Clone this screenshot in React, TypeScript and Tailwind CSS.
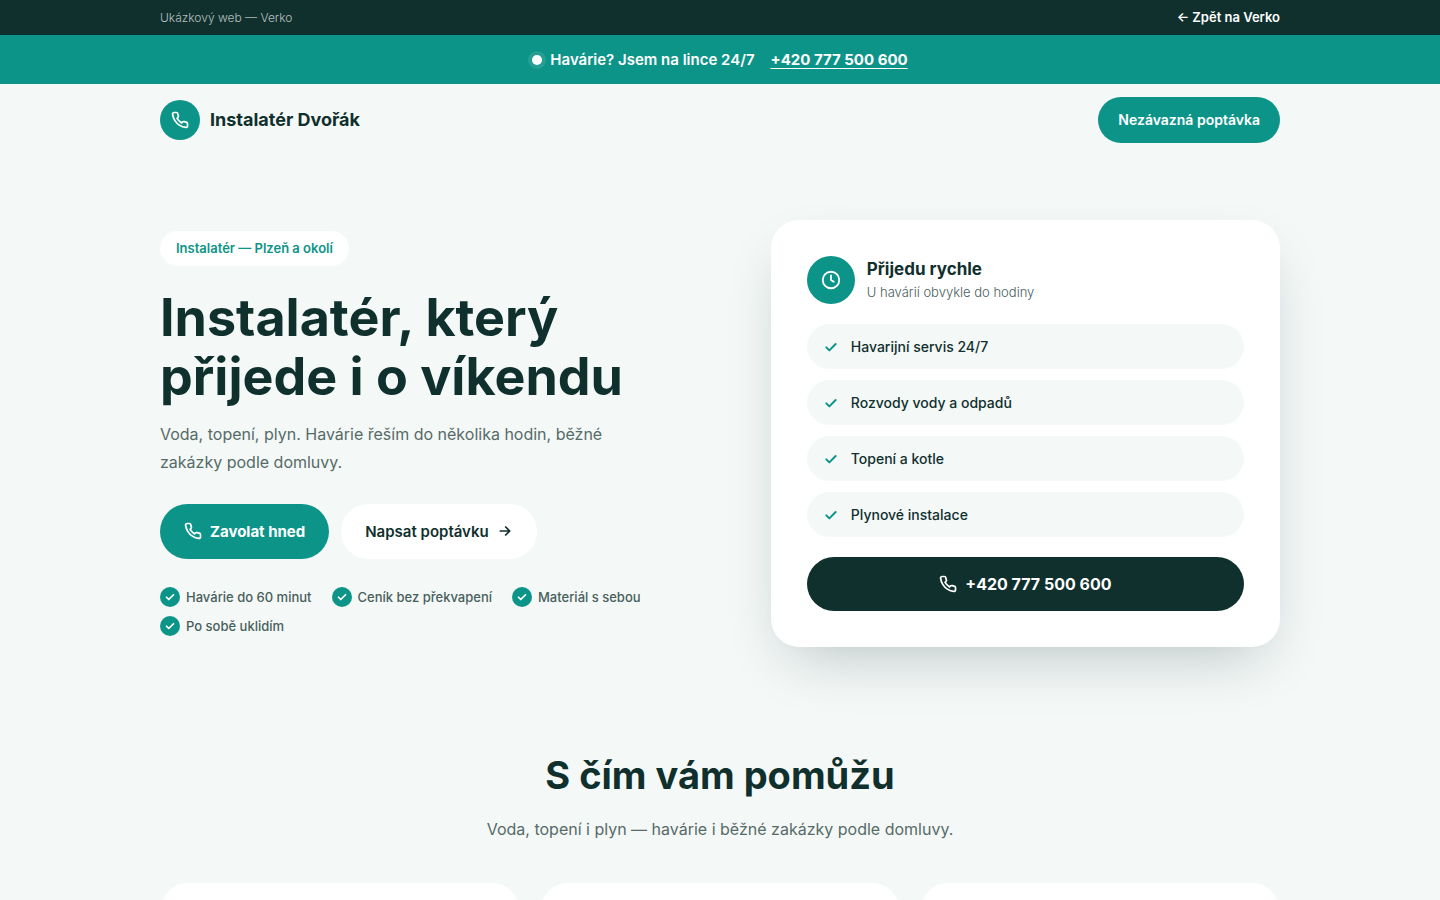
import type { ReactNode } from 'react'

const PHONE = '+420 777 500 600'
const PHONE_HREF = 'tel:+420777500600'

const services = ['Havarijní servis 24/7', 'Rozvody vody a odpadů', 'Topení a kotle', 'Plynové instalace']
const benefits = ['Havárie do 60 minut', 'Ceník bez překvapení', 'Materiál s sebou', 'Po sobě uklidím']

const icons = {
  phone:
    'M22 16.92v3a2 2 0 0 1-2.18 2 19.79 19.79 0 0 1-8.63-3.07 19.5 19.5 0 0 1-6-6 19.79 19.79 0 0 1-3.07-8.67A2 2 0 0 1 4.11 2h3a2 2 0 0 1 2 1.72 12.84 12.84 0 0 0 .7 2.81 2 2 0 0 1-.45 2.11L8.09 9.91a16 16 0 0 0 6 6l1.27-1.27a2 2 0 0 1 2.11-.45 12.84 12.84 0 0 0 2.81.7A2 2 0 0 1 22 16.92z',
  clock: 'M12 7v5l3 2M21 12a9 9 0 1 1-18 0 9 9 0 0 1 18 0Z',
  check: 'M5 12.5l4.5 4.5L19 7.5',
  arrow: 'M5 12h14M13 6l6 6-6 6',
}

function Icon({ name, className, stroke = 2 }: { name: keyof typeof icons; className: string; stroke?: number }) {
  return (
    <svg
      viewBox="0 0 24 24"
      fill="none"
      stroke="currentColor"
      strokeWidth={stroke}
      strokeLinecap="round"
      strokeLinejoin="round"
      className={`shrink-0 ${className}`}
      aria-hidden="true"
    >
      <path d={icons[name]} />
    </svg>
  )
}

function Container({ className = '', children }: { className?: string; children: ReactNode }) {
  return <div className={`mx-auto w-full max-w-[1168px] px-6 ${className}`}>{children}</div>
}

function DemoBar() {
  return (
    <div className="bg-[#10302d]">
      <Container className="flex items-center justify-between py-2">
        <span className="text-xs leading-[19px] font-light text-white/70">Ukázkový web — Verko</span>
        <a href="#verko" className="text-[13px] leading-[19px] font-semibold text-white">← Zpět na Verko</a>
      </Container>
    </div>
  )
}

function EmergencyBar() {
  return (
    <div className="bg-[#0d9488] py-3 text-white">
      <Container className="flex items-center justify-center gap-4 text-[15px] leading-[25px]">
        <span className="flex items-center gap-2 font-semibold">
          <span className="h-[10px] w-[10px] rounded-full bg-white ring-4 ring-white/10" />
          Havárie? Jsem na lince 24/7
        </span>
        <a href={PHONE_HREF} className="font-bold underline underline-offset-3">{PHONE}</a>
      </Container>
    </div>
  )
}

function Header() {
  return (
    <header>
      <Container className="flex items-center justify-between py-[13px]">
        <a href="#top" className="flex items-center gap-[10px]">
          <span className="flex h-10 w-10 items-center justify-center rounded-full bg-[#0d9488] text-white">
            <Icon name="phone" stroke={2.3} className="h-[18px] w-[18px]" />
          </span>
          <span className="text-lg font-bold">Instalatér Dvořák</span>
        </a>
        <a href="#poptavka" className="rounded-full bg-[#0d9488] px-5 py-3 text-sm leading-[22px] font-semibold text-white">
          Nezávazná poptávka
        </a>
      </Container>
    </header>
  )
}

function Intro() {
  return (
    <div>
      <span className="inline-block rounded-full bg-white px-4 py-2 text-[13px] leading-[19px] font-semibold text-[#0d9488]">
        Instalatér — Plzeň a okolí
      </span>
      <h1 className="mt-5.5 text-[52px] leading-[59px] font-bold">Instalatér, který přijede i o víkendu</h1>
      <p className="mt-3.5 max-w-[480px] text-base leading-7 text-[#566b68]">
        Voda, topení, plyn. Havárie řeším do několika hodin, běžné zakázky podle domluvy.
      </p>
      <div className="mt-7 flex flex-wrap gap-3">
        <a
          href={PHONE_HREF}
          className="flex items-center gap-2 rounded-full bg-[#0d9488] px-6 py-4 text-[15px] leading-[23px] font-bold text-white"
        >
          <Icon name="phone" stroke={2.3} className="h-[18px] w-[18px]" />
          Zavolat hned
        </a>
        <a
          href="#poptavka"
          className="flex items-center gap-2 rounded-full bg-white px-6 py-4 text-[15px] leading-[23px] font-semibold"
        >
          Napsat poptávku
          <Icon name="arrow" stroke={2.6} className="h-4 w-4" />
        </a>
      </div>
      <ul className="mt-7 flex flex-wrap gap-x-5 gap-y-2">
        {benefits.map((b) => (
          <li key={b} className="flex items-center gap-[6px] text-[13px] leading-[21px] font-medium text-[#48605c]">
            <span className="flex h-5 w-5 items-center justify-center rounded-full bg-[#0d9488] text-white">
              <Icon name="check" stroke={3.4} className="h-3 w-3" />
            </span>
            {b}
          </li>
        ))}
      </ul>
    </div>
  )
}

function ContactCard() {
  return (
    <aside className="rounded-[28px] bg-white p-9 shadow-[0_24px_60px_-20px_rgba(16,48,45,0.28)]">
      <div className="flex items-center gap-3">
        <span className="flex h-12 w-12 items-center justify-center rounded-full bg-[#0d9488] text-white">
          <Icon name="clock" className="h-[22px] w-[22px]" />
        </span>
        <div>
          <p className="text-[17px] leading-6 font-bold">Přijedu rychle</p>
          <p className="text-[13px] leading-[22px] font-light text-[#48605c]">U havárií obvykle do hodiny</p>
        </div>
      </div>
      <ul className="mt-5 flex flex-col gap-[11px]">
        {services.map((s) => (
          <li
            key={s}
            className="flex items-center gap-3 rounded-full bg-[#f4f8f7] px-4 py-3 text-sm leading-[21px] font-medium"
          >
            <Icon name="check" stroke={3} className="h-4 w-4 text-[#0d9488]" />
            {s}
          </li>
        ))}
      </ul>
      <a
        href={PHONE_HREF}
        className="mt-5 flex items-center justify-center gap-2 rounded-full bg-[#10302d] py-[14px] text-base leading-[26px] font-bold text-white"
      >
        <Icon name="phone" stroke={2.3} className="h-[18px] w-[18px]" />
        {PHONE}
      </a>
    </aside>
  )
}

function Services() {
  return (
    <section className="pt-10">
      <Container>
        <h2 className="text-center text-[38px] leading-12 font-bold">S čím vám pomůžu</h2>
        <p className="mt-4 text-center text-base leading-7 text-[#566b68]">
          Voda, topení i plyn — havárie i běžné zakázky podle domluvy.
        </p>
        <div className="mt-10 grid gap-5 md:grid-cols-3">
          {['voda', 'topeni', 'plyn'].map((id) => (
            <article key={id} className="min-h-60 rounded-[28px] bg-white" />
          ))}
        </div>
      </Container>
    </section>
  )
}

export default function App() {
  return (
    <div id="top" className="min-h-screen bg-[#f4f8f7] font-['Inter','Liberation_Sans',sans-serif] text-[#10302d]">
      <DemoBar />
      <EmergencyBar />
      <Header />
      <main>
        <section className="py-16">
          <Container className="grid items-center gap-12 lg:grid-cols-[1.05fr_0.95fr]">
            <Intro />
            <ContactCard />
          </Container>
        </section>
        <Services />
      </main>
    </div>
  )
}
